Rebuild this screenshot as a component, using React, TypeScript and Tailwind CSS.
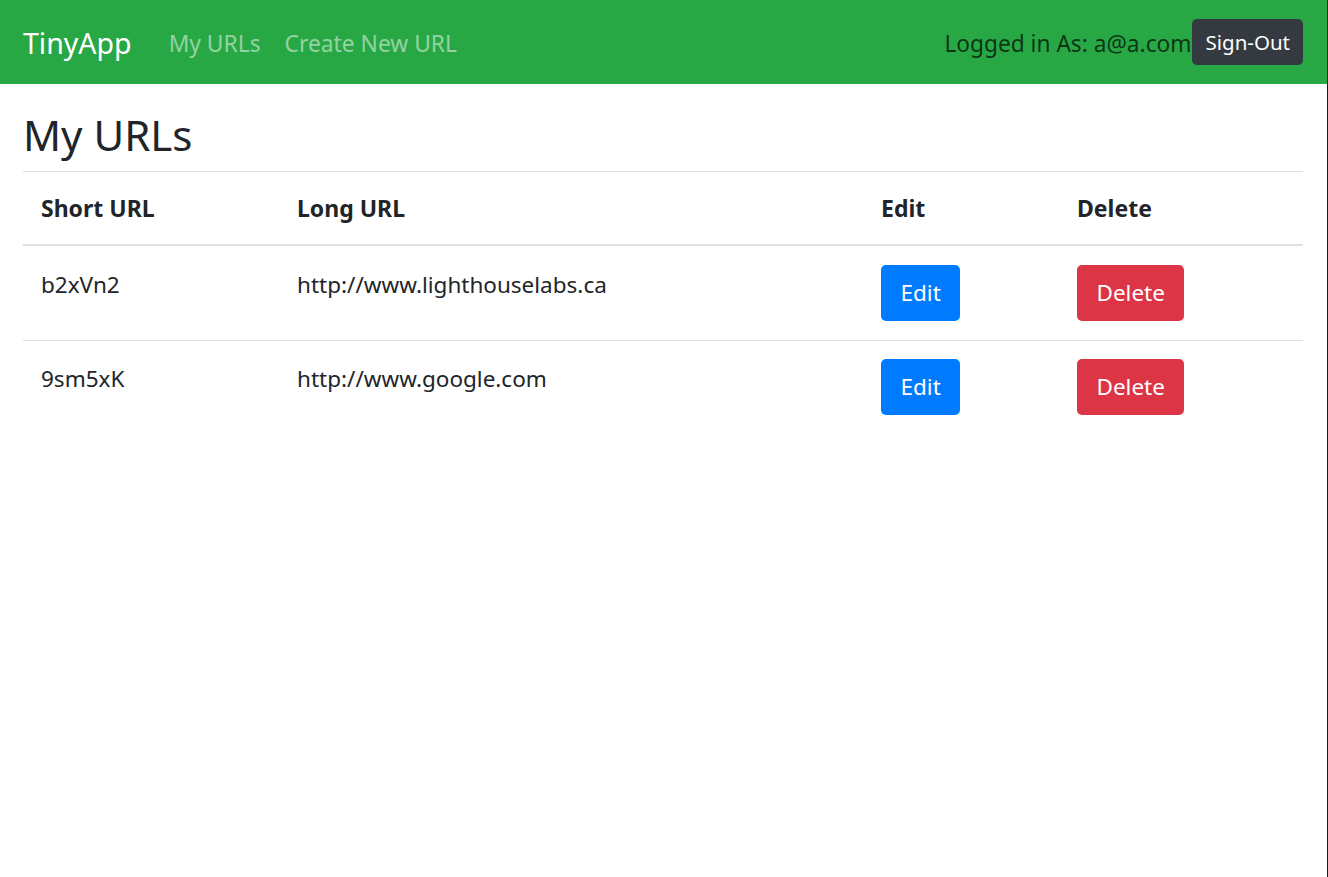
import React from "react";

const rows = [
  { short: "b2xVn2", long: "http://www.lighthouselabs.ca" },
  { short: "9sm5xK", long: "http://www.google.com" },
];

export default function App() {
  return (
    <div className="min-h-screen bg-white border-r border-[#1e1e1e] text-[#212529] font-['Noto_Sans','Open_Sans',sans-serif]">
      <nav className="h-[84px] bg-[#28a745] flex items-center pl-[23px] pr-[24px]">
        <a className="mt-[3px] text-[28.5px] leading-none text-white mr-[37px]">TinyApp</a>
        <a className="mt-[4px] text-[22.8px] leading-none text-white/50 mr-[24px]">My URLs</a>
        <a className="mt-[4px] text-[22.8px] leading-none text-white/50">Create New URL</a>
        <div className="ml-auto flex items-center">
          <span className="mt-[4px] text-[22.7px] leading-none text-black/70">Logged in As: a@a.com</span>
          <button className="ml-[1px] h-[46px] px-[13px] rounded-[5px] bg-[#343a40] text-white text-[20.5px] leading-none">
            Sign-Out
          </button>
        </div>
      </nav>
      <main className="pl-[23px] pr-[24px]">
        <h1 className="mt-[26px] mb-[11px] text-[42px] leading-[1.2] font-normal">My URLs</h1>
        <table className="w-full table-fixed border-collapse text-[22.5px] leading-[33px]">
          <colgroup>
            <col className="w-[256px]" />
            <col className="w-[584px]" />
            <col className="w-[196px]" />
            <col className="w-[244px]" />
          </colgroup>
          <thead>
            <tr className="border-t border-[#dee2e6] border-b-2">
              <th className="text-left text-[23px] font-bold px-[18px] pt-[20px] pb-[19px]">Short URL</th>
              <th className="text-left text-[23px] font-bold px-[18px] pt-[20px] pb-[19px]">Long URL</th>
              <th className="text-left text-[23px] font-bold px-[18px] pt-[20px] pb-[19px]">Edit</th>
              <th className="text-left text-[23px] font-bold px-[18px] pt-[20px] pb-[19px]">Delete</th>
            </tr>
          </thead>
          <tbody>
            {rows.map((r, i) => {
              const first = i === 0;
              const textPad = first ? "pt-[22px]" : "pt-[21px]";
              const btnPad = first ? "pt-[19px]" : "pt-[18px]";
              return (
                <tr key={r.short} className={first ? "border-b border-[#dee2e6]" : ""}>
                  <td className={`align-top px-[18px] pb-[19px] ${textPad}`}>{r.short}</td>
                  <td className={`align-top px-[18px] pb-[19px] ${textPad}`}>{r.long}</td>
                  <td className={`align-top px-[18px] pb-[19px] ${btnPad}`}>
                    <button className="h-[56px] px-[19.5px] rounded-[5px] bg-[#007bff] text-white text-[22.5px] leading-none">
                      Edit
                    </button>
                  </td>
                  <td className={`align-top px-[18px] pb-[19px] ${btnPad}`}>
                    <button className="h-[56px] px-[19.5px] rounded-[5px] bg-[#dc3545] text-white text-[22.5px] leading-none">
                      Delete
                    </button>
                  </td>
                </tr>
              );
            })}
          </tbody>
        </table>
      </main>
    </div>
  );
}
